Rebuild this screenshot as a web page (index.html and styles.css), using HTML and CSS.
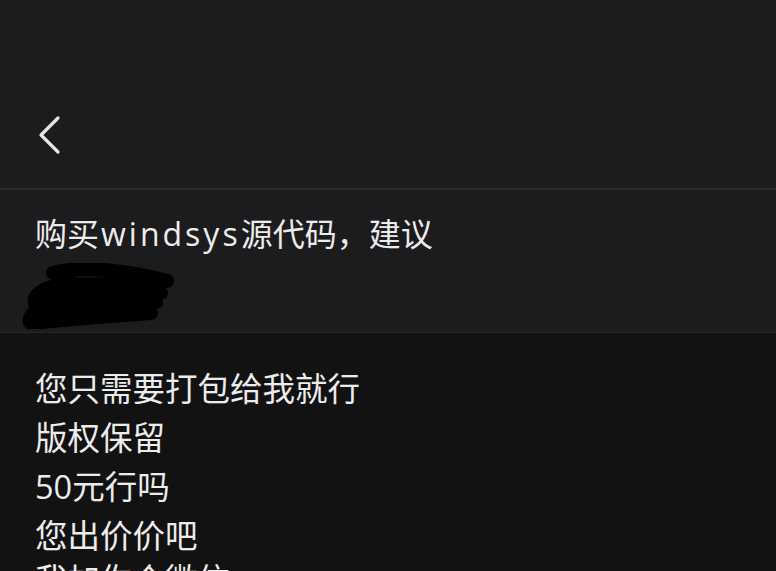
FILE: index.html
```html
<!DOCTYPE html>
<html lang="zh-CN">
<head>
    <meta charset="UTF-8">
    <meta name="viewport" content="width=device-width, initial-scale=1.0">
    <title>反馈详情</title>
    <link rel="stylesheet" href="styles.css">
</head>
<body>
    <div class="topbar">
        <a href="#" class="back" aria-label="返回">
            <svg width="26" height="40" viewBox="0 0 26 40">
                <polyline points="21,3 4,20 21,37" fill="none" stroke="#e6e6e6" stroke-width="3.2" stroke-linecap="round" stroke-linejoin="round"/>
            </svg>
        </a>
    </div>

    <div class="header">
        <h1 class="title">购买<span class="latin">windsys</span>源代码，建议</h1>
        <svg class="scribble" width="160" height="66" viewBox="0 0 160 66">
            <path d="M32 10 C60 2 110 8 146 18 C120 22 70 20 42 22 C20 24 12 34 14 40 C40 34 90 30 140 30 C110 42 60 44 18 46 C10 50 6 58 10 60 C50 56 100 52 130 50"
                  fill="none" stroke="#000" stroke-width="14" stroke-linecap="round" stroke-linejoin="round"/>
            <path d="M40 14 C70 30 100 40 136 40" fill="none" stroke="#000" stroke-width="12" stroke-linecap="round"/>
        </svg>
    </div>

    <div class="content">
        <p>您只需要打包给我就行</p>
        <p>版权保留</p>
        <p>50元行吗</p>
        <p>您出价价吧</p>
        <p class="last">我加你个微信</p>
    </div>
</body>
</html>
```

FILE: styles.css
```css
body {
    margin: 0;
    padding: 0;
    background: #121212;
    color: #ececec;
    font-family: "Open Sans", "Noto Sans CJK SC", sans-serif;
    height: 571px;
    overflow: hidden;
}

.topbar {
    height: 190px;
    background: #1c1c1e;
    display: flex;
    align-items: flex-end;
    padding: 0 0 0 37px;
    box-sizing: border-box;
    border-bottom: 2px solid #2b2b2d;
}

.back {
    display: block;
    margin-bottom: 33px;
    line-height: 0;
}

.header {
    background: #1c1c1e;
    padding: 21px 35px 0 35px;
    height: 143px;
    box-sizing: border-box;
    border-bottom: 1px solid #262628;
    overflow: hidden;
}

.title {
    margin: 0;
    font-size: 32px;
    font-weight: 400;
    line-height: 45px;
    color: #ececec;
}

.latin {
    letter-spacing: 3px;
    margin-left: 2px;
}

.scribble {
    display: block;
    margin: 7px 0 0 -14px;
}

.content {
    padding: 31px 35px 0 35px;
}

.content p {
    margin: 0;
    font-size: 32.5px;
    line-height: 49px;
}

.content .last {
    margin-top: -5px;
}
```
